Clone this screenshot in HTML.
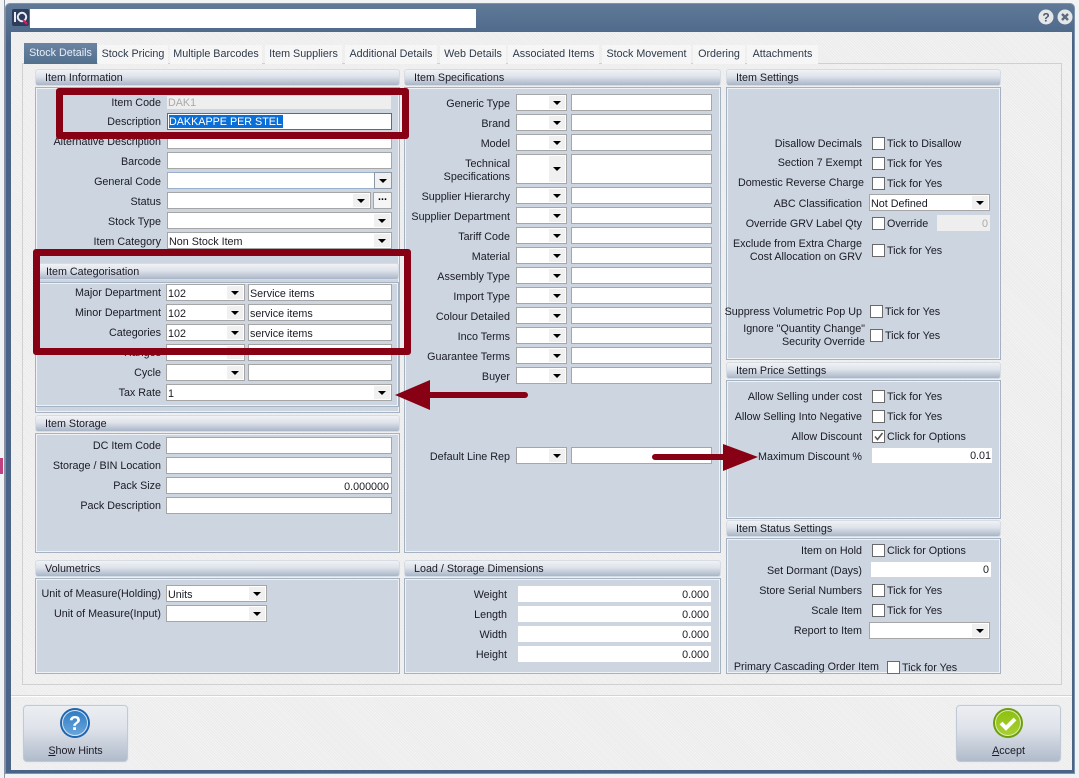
<!DOCTYPE html>
<html><head><meta charset="utf-8"><style>
html,body{margin:0;padding:0;width:1079px;height:778px;overflow:hidden;background:#f2f3f5}
body{position:relative;font:10.75px/14px "Liberation Sans",sans-serif;color:#1a1a24}
div,span{position:absolute;box-sizing:border-box}
.win{left:5px;top:3px;width:1070px;height:771px;background:linear-gradient(#5f7997,#4a6488 40px);border-radius:5px 5px 0 0;border:1px solid #7c93ad}
.in{left:11px;top:32px;width:1061px;height:738px;background:#efefef;background-image:repeating-linear-gradient(45deg,#f3f3f3 0 1px,#ebebeb 1px 2px)}
.page{left:22px;top:63px;width:1040px;height:622px;border:1px solid #d0d0d0}
.sep{left:11px;top:695px;width:1061px;height:2px;background:#d4d4d4;border-bottom:1px solid #fff}
.t{top:45px;height:19px;background:#f6f6f6;color:#2e3a4a;text-align:center;line-height:19px;white-space:nowrap}
.ta{top:43px;height:21px;background:linear-gradient(#6a84a2,#53708f);color:#e8eef4;line-height:21px}
.h{height:17px;border-radius:3px;background:linear-gradient(#f0f2f5,#dde2ea 45%,#a9b6c8);border:1px solid #d6dce4;padding-left:9px;line-height:16px;white-space:nowrap}
.b{background:#cdd6e0;border:1px solid #a4b2c2;box-shadow:inset 0 0 0 1px #eef1f5}
.l{text-align:right;white-space:nowrap;height:14px;left:0;margin-top:1px}
.v{white-space:nowrap;height:14px;margin-top:1px}
.f{background:#fff;border:1px solid #a6a6a6;height:17px;padding-left:1px;line-height:18px;white-space:nowrap;overflow:hidden}
.ar{background:#f0f0f0;width:16px;top:1px;bottom:1px;right:1px}
.ar:after{content:"";position:absolute;left:4px;top:50%;margin-top:-2px;border:4px solid transparent;border-top:4px solid #000;border-bottom:0}
.c{width:13px;height:13px;background:#fff;border:1px solid #6a6a6a;margin-top:1px}
.red{border:7px solid #870014;border-radius:3px}
.bt{top:705px;width:105px;height:57px;border-radius:4px;background:linear-gradient(#eceef2,#dfe3ea 40%,#b0bbcb);border:1px solid #c0cad6;box-shadow:0 0 0 1px #e8ebf0}
.bl{left:0;right:0;top:38px;text-align:center;line-height:14px}
u{text-decoration:underline}
svg{position:absolute}
</style></head><body>
<div style="left:4px;top:0;width:1px;height:778px;background:#8a94a2"></div>
<div style="left:0;top:458px;width:3px;height:16px;background:#c04080"></div>
<div class="win"></div>
<svg style="left:12px;top:9px" width="17" height="17" viewBox="0 0 17 17"><rect width="17" height="17" rx="2" fill="#2e3c5c"/><rect x="2" y="3" width="2" height="10" fill="#e8ecf4"/><circle cx="10" cy="8" r="4.2" fill="none" stroke="#e8ecf4" stroke-width="2"/><path d="M11 11l4 4" stroke="#d0206a" stroke-width="2"/></svg>
<div style="left:30px;top:9px;width:446px;height:19px;background:#fff"></div>
<svg style="left:1038px;top:9px" width="16" height="16"><circle cx="8" cy="8" r="7.5" fill="#e4e6e8"/><text x="8" y="12.500" font-family="Liberation Sans" font-size="12" font-weight="bold" text-anchor="middle" fill="#4a5a70">?</text></svg>
<svg style="left:1057px;top:9px" width="16" height="16"><circle cx="8" cy="8" r="7.5" fill="#e4e6e8"/><path d="M5 5l6 6M11 5l-6 6" stroke="#5a6a80" stroke-width="2.4"/></svg>
<div class="in"></div>
<div class="page"></div>
<div class="sep"></div>

<div class="t ta" style="left:24px;width:73px">Stock Details</div>
<div class="t" style="left:98px;width:70px">Stock Pricing</div>
<div class="t" style="left:170px;width:92px">Multiple Barcodes</div>
<div class="t" style="left:265px;width:77px">Item Suppliers</div>
<div class="t" style="left:345px;width:92px">Additional Details</div>
<div class="t" style="left:440px;width:66px">Web Details</div>
<div class="t" style="left:508px;width:91px">Associated Items</div>
<div class="t" style="left:602px;width:89px">Stock Movement</div>
<div class="t" style="left:693px;width:52px">Ordering</div>
<div class="t" style="left:747px;width:71px">Attachments</div>

<div class="h" style="left:35px;top:69px;width:365px">Item Information</div>
<div class="b" style="left:35px;top:87px;width:365px;height:326px"></div>
<div class="h" style="left:404px;top:69px;width:317px">Item Specifications</div>
<div class="b" style="left:404px;top:87px;width:317px;height:466px"></div>
<div class="h" style="left:726px;top:69px;width:275px">Item Settings</div>
<div class="b" style="left:726px;top:87px;width:275px;height:273px"></div>
<div class="h" style="left:726px;top:362px;width:275px">Item Price Settings</div>
<div class="b" style="left:726px;top:380px;width:275px;height:139px"></div>
<div class="h" style="left:726px;top:520px;width:275px">Item Status Settings</div>
<div class="b" style="left:726px;top:538px;width:275px;height:136px"></div>
<div class="h" style="left:36px;top:263px;width:363px">Item Categorisation</div>
<div class="b" style="left:35px;top:282px;width:364px;height:125px;"></div>
<div class="h" style="left:35px;top:415px;width:365px">Item Storage</div>
<div class="b" style="left:35px;top:433px;width:365px;height:120px"></div>
<div class="h" style="left:35px;top:560px;width:365px">Volumetrics</div>
<div class="b" style="left:35px;top:578px;width:365px;height:96px"></div>
<div class="h" style="left:404px;top:560px;width:317px">Load / Storage Dimensions</div>
<div class="b" style="left:404px;top:578px;width:317px;height:96px"></div>

<!-- Item information -->
<div class="l" style="width:161px;top:95px">Item Code</div>
<div style="left:167px;top:96px;width:224px;height:13px;background:#eee;color:#aaa;padding-left:1px;line-height:14px">DAK1</div>
<div class="l" style="width:161px;top:114px">Description</div>
<div class="f" style="left:167px;top:113px;width:225px;border-color:#2878c8;height:17px"><span style="left:1px;top:1px;height:13px;background:#0a6ed8;color:#fff;line-height:14px;padding:0 1px 0 0;white-space:nowrap">DAKKAPPE PER STEL</span></div>
<div class="l" style="width:161px;top:134px">Alternative Description</div>
<div class="f" style="left:167px;top:132px;width:225px"></div>
<div class="l" style="width:161px;top:154px">Barcode</div>
<div class="f" style="left:167px;top:152px;width:225px"></div>
<div class="l" style="width:161px;top:174px">General Code</div>
<div class="f" style="left:167px;top:172px;width:225px;border-color:#9ab0cc"></div>
<div style="left:374px;top:172px;width:18px;height:17px;background:#f0f0f0;border:1px solid #8a98a8"></div>
<div style="left:379px;top:179px;border:4px solid transparent;border-top:4px solid #000;border-bottom:0"></div>
<div class="l" style="width:161px;top:194px">Status</div>
<div class="f" style="left:167px;top:192px;width:204px"><span class="ar"></span></div>
<div style="left:373px;top:192px;width:19px;height:17px;background:#f6f6f6;border:1px solid #a6a6a6;text-align:center;line-height:9px;font-weight:bold;color:#000">...</div>
<div class="l" style="width:161px;top:214px">Stock Type</div>
<div class="f" style="left:167px;top:212px;width:225px"><span class="ar"></span></div>
<div class="l" style="width:161px;top:234px">Item Category</div>
<div class="f" style="left:167px;top:232px;width:225px">Non Stock Item<span class="ar"></span></div>

<!-- categorisation -->
<div class="l" style="width:161px;top:285px">Major Department</div>
<div class="f" style="left:166px;top:284px;width:79px">102<span class="ar"></span></div>
<div class="f" style="left:248px;top:284px;width:144px">Service items</div>
<div class="l" style="width:161px;top:305px">Minor Department</div>
<div class="f" style="left:166px;top:304px;width:79px">102<span class="ar"></span></div>
<div class="f" style="left:248px;top:304px;width:144px">service items</div>
<div class="l" style="width:161px;top:325px">Categories</div>
<div class="f" style="left:166px;top:324px;width:79px">102<span class="ar"></span></div>
<div class="f" style="left:248px;top:324px;width:144px">service items</div>
<div class="l" style="width:161px;top:345px">Ranges</div>
<div class="f" style="left:166px;top:344px;width:79px"><span class="ar"></span></div>
<div class="f" style="left:248px;top:344px;width:144px"></div>
<div class="l" style="width:161px;top:365px">Cycle</div>
<div class="f" style="left:166px;top:364px;width:79px"><span class="ar"></span></div>
<div class="f" style="left:248px;top:364px;width:144px"></div>
<div class="l" style="width:161px;top:385px">Tax Rate</div>
<div class="f" style="left:166px;top:384px;width:226px">1<span class="ar"></span></div>

<!-- storage -->
<div class="l" style="width:161px;top:438px">DC Item Code</div>
<div class="f" style="left:166px;top:437px;width:226px"></div>
<div class="l" style="width:161px;top:458px">Storage / BIN Location</div>
<div class="f" style="left:166px;top:457px;width:226px"></div>
<div class="l" style="width:161px;top:478px">Pack Size</div>
<div class="f" style="left:166px;top:477px;width:226px;text-align:right;padding-right:2px">0.000000</div>
<div class="l" style="width:161px;top:498px">Pack Description</div>
<div class="f" style="left:166px;top:497px;width:226px"></div>

<!-- volumetrics -->
<div class="l" style="width:161px;top:586px">Unit of Measure(Holding)</div>
<div class="f" style="left:166px;top:585px;width:101px">Units<span class="ar"></span></div>
<div class="l" style="width:161px;top:606px">Unit of Measure(Input)</div>
<div class="f" style="left:166px;top:605px;width:101px"><span class="ar"></span></div>

<!-- specifications -->
<div class="l" style="width:510px;top:96px">Generic Type</div>
<div class="f" style="left:516px;top:94px;width:51px"><span class="ar"></span></div><div class="f" style="left:571px;top:94px;width:141px"></div>
<div class="l" style="width:510px;top:116px">Brand</div>
<div class="f" style="left:516px;top:114px;width:51px"><span class="ar"></span></div><div class="f" style="left:571px;top:114px;width:141px"></div>
<div class="l" style="width:510px;top:136px">Model</div>
<div class="f" style="left:516px;top:134px;width:51px"><span class="ar"></span></div><div class="f" style="left:571px;top:134px;width:141px"></div>
<div class="l" style="width:510px;top:156px">Technical</div>
<div class="l" style="width:510px;top:169px">Specifications</div>
<div class="f" style="left:516px;top:154px;width:51px;height:30px"><span class="ar"></span></div><div class="f" style="left:571px;top:154px;width:141px;height:30px"></div>
<div class="l" style="width:510px;top:189px">Supplier Hierarchy</div>
<div class="f" style="left:516px;top:187px;width:51px"><span class="ar"></span></div><div class="f" style="left:571px;top:187px;width:141px"></div>
<div class="l" style="width:510px;top:209px">Supplier Department</div>
<div class="f" style="left:516px;top:207px;width:51px"><span class="ar"></span></div><div class="f" style="left:571px;top:207px;width:141px"></div>
<div class="l" style="width:510px;top:229px">Tariff Code</div>
<div class="f" style="left:516px;top:227px;width:51px"><span class="ar"></span></div><div class="f" style="left:571px;top:227px;width:141px"></div>
<div class="l" style="width:510px;top:249px">Material</div>
<div class="f" style="left:516px;top:247px;width:51px"><span class="ar"></span></div><div class="f" style="left:571px;top:247px;width:141px"></div>
<div class="l" style="width:510px;top:269px">Assembly Type</div>
<div class="f" style="left:516px;top:267px;width:51px"><span class="ar"></span></div><div class="f" style="left:571px;top:267px;width:141px"></div>
<div class="l" style="width:510px;top:289px">Import Type</div>
<div class="f" style="left:516px;top:287px;width:51px"><span class="ar"></span></div><div class="f" style="left:571px;top:287px;width:141px"></div>
<div class="l" style="width:510px;top:309px">Colour Detailed</div>
<div class="f" style="left:516px;top:307px;width:51px"><span class="ar"></span></div><div class="f" style="left:571px;top:307px;width:141px"></div>
<div class="l" style="width:510px;top:329px">Inco Terms</div>
<div class="f" style="left:516px;top:327px;width:51px"><span class="ar"></span></div><div class="f" style="left:571px;top:327px;width:141px"></div>
<div class="l" style="width:510px;top:349px">Guarantee Terms</div>
<div class="f" style="left:516px;top:347px;width:51px"><span class="ar"></span></div><div class="f" style="left:571px;top:347px;width:141px"></div>
<div class="l" style="width:510px;top:369px">Buyer</div>
<div class="f" style="left:516px;top:367px;width:51px"><span class="ar"></span></div><div class="f" style="left:571px;top:367px;width:141px"></div>
<div class="l" style="width:510px;top:449px">Default Line Rep</div>
<div class="f" style="left:516px;top:447px;width:51px"><span class="ar"></span></div><div class="f" style="left:571px;top:447px;width:141px"></div>

<!-- load -->
<div class="l" style="width:507px;top:587px">Weight</div>
<div style="left:518px;top:586px;width:193px;height:16px;background:#fff;text-align:right;padding-right:2px;line-height:18px">0.000</div>
<div class="l" style="width:507px;top:607px">Length</div>
<div style="left:518px;top:606px;width:193px;height:16px;background:#fff;text-align:right;padding-right:2px;line-height:18px">0.000</div>
<div class="l" style="width:507px;top:627px">Width</div>
<div style="left:518px;top:626px;width:193px;height:16px;background:#fff;text-align:right;padding-right:2px;line-height:18px">0.000</div>
<div class="l" style="width:507px;top:647px">Height</div>
<div style="left:518px;top:646px;width:193px;height:16px;background:#fff;text-align:right;padding-right:2px;line-height:18px">0.000</div>

<!-- item settings -->
<div class="l" style="width:862px;top:136px">Disallow Decimals</div><div class="c" style="left:872px;top:136px"></div><div class="v" style="left:887px;top:136px">Tick to Disallow</div>
<div class="l" style="width:862px;top:155px">Section 7 Exempt</div><div class="c" style="left:872px;top:156px"></div><div class="v" style="left:887px;top:156px">Tick for Yes</div>
<div class="l" style="width:864px;top:175px">Domestic Reverse Charge</div><div class="c" style="left:872px;top:176px"></div><div class="v" style="left:887px;top:176px">Tick for Yes</div>
<div class="l" style="width:862px;top:196px">ABC Classification</div>
<div class="f" style="left:869px;top:194px;width:121px">Not Defined<span class="ar"></span></div>
<div class="l" style="width:862px;top:216px">Override GRV Label Qty</div><div class="c" style="left:872px;top:216px"></div><div class="v" style="left:887px;top:216px">Override</div>
<div style="left:937px;top:215px;width:53px;height:16px;background:#eee;color:#aaa;text-align:right;padding-right:2px;line-height:18px">0</div>
<div class="l" style="width:862px;top:236px">Exclude from Extra Charge</div>
<div class="l" style="width:862px;top:249px">Cost Allocation on GRV</div><div class="c" style="left:872px;top:243px"></div><div class="v" style="left:887px;top:243px">Tick for Yes</div>
<div class="l" style="width:862px;top:304px">Suppress Volumetric Pop Up</div><div class="c" style="left:870px;top:304px"></div><div class="v" style="left:885px;top:304px">Tick for Yes</div>
<div class="l" style="width:865px;top:321px">Ignore "Quantity Change"</div>
<div class="l" style="width:865px;top:334px">Security Override</div><div class="c" style="left:870px;top:328px"></div><div class="v" style="left:885px;top:328px">Tick for Yes</div>

<!-- price -->
<div class="l" style="width:862px;top:389px">Allow Selling under cost</div><div class="c" style="left:872px;top:389px"></div><div class="v" style="left:887px;top:389px">Tick for Yes</div>
<div class="l" style="width:862px;top:409px">Allow Selling Into Negative</div><div class="c" style="left:872px;top:409px"></div><div class="v" style="left:887px;top:409px">Tick for Yes</div>
<div class="l" style="width:862px;top:429px">Allow Discount</div><div class="c" style="left:872px;top:429px"></div><div class="v" style="left:887px;top:429px">Click for Options</div>
<svg style="left:872px;top:430px" width="13" height="13"><path d="M3 6.500l2.500 3L10.500 3" fill="none" stroke="#555" stroke-width="1.500"/></svg>
<div class="l" style="width:862px;top:449px">Maximum Discount %</div>
<div style="left:872px;top:448px;width:120px;height:15px;background:#fff;text-align:right;padding-right:1px;line-height:17px">0.01</div>

<!-- status -->
<div class="l" style="width:862px;top:543px">Item on Hold</div><div class="c" style="left:872px;top:543px"></div><div class="v" style="left:887px;top:543px">Click for Options</div>
<div class="l" style="width:862px;top:563px">Set Dormant (Days)</div>
<div style="left:871px;top:562px;width:120px;height:15px;background:#fff;text-align:right;padding-right:2px;line-height:17px">0</div>
<div class="l" style="width:862px;top:583px">Store Serial Numbers</div><div class="c" style="left:872px;top:583px"></div><div class="v" style="left:887px;top:583px">Tick for Yes</div>
<div class="l" style="width:862px;top:603px">Scale Item</div><div class="c" style="left:872px;top:603px"></div><div class="v" style="left:887px;top:603px">Tick for Yes</div>
<div class="l" style="width:862px;top:623px">Report to Item</div>
<div class="f" style="left:869px;top:622px;width:121px"><span class="ar"></span></div>
<div class="l" style="width:879px;top:659px">Primary Cascading Order Item</div><div class="c" style="left:887px;top:660px"></div><div class="v" style="left:902px;top:660px">Tick for Yes</div>

<!-- annotations -->
<div class="red" style="left:56px;top:88px;width:353px;height:51px"></div>
<div class="red" style="left:33px;top:249px;width:378px;height:106px"></div>
<svg style="left:390px;top:375px" width="145" height="40"><path d="M5 20L40 5V17H135a3 3 0 0 1 0 6L40 23V35Z" fill="#870014"/></svg>
<svg style="left:648px;top:440px" width="115" height="35"><path d="M7 14H75V4L110 17 75 31V20H7a3 3 0 0 1 0-6Z" fill="#870014"/></svg>

<!-- buttons -->
<div class="bt" style="left:23px">
<svg style="left:35px;top:1px" width="32" height="32"><defs><linearGradient id="q" x1="0" y1="0" x2="0" y2="1"><stop offset="0" stop-color="#2f7cc4"/><stop offset="1" stop-color="#6aa6dc"/></linearGradient></defs><circle cx="16" cy="16" r="15" fill="#1f66ae"/><circle cx="16" cy="16" r="12.500" fill="url(#q)" stroke="#d8e6f4" stroke-width="1"/><text x="16" y="23" font-family="Liberation Sans" font-size="20" font-weight="bold" text-anchor="middle" fill="#fff">?</text></svg>
<div class="bl"><u>S</u>how Hints</div></div>
<div class="bt" style="left:956px">
<svg style="left:35px;top:1px" width="32" height="32"><defs><linearGradient id="g" x1="0" y1="0" x2="0" y2="1"><stop offset="0" stop-color="#8cc010"/><stop offset="1" stop-color="#a8d030"/></linearGradient></defs><circle cx="16" cy="16" r="15" fill="#6e9e0c"/><circle cx="16" cy="16" r="12.500" fill="url(#g)" stroke="#dcecb4" stroke-width="1"/><path d="M9 16l5 5 9-9" fill="none" stroke="#fff" stroke-width="4"/></svg>
<div class="bl"><u>A</u>ccept</div></div>
</body></html>
